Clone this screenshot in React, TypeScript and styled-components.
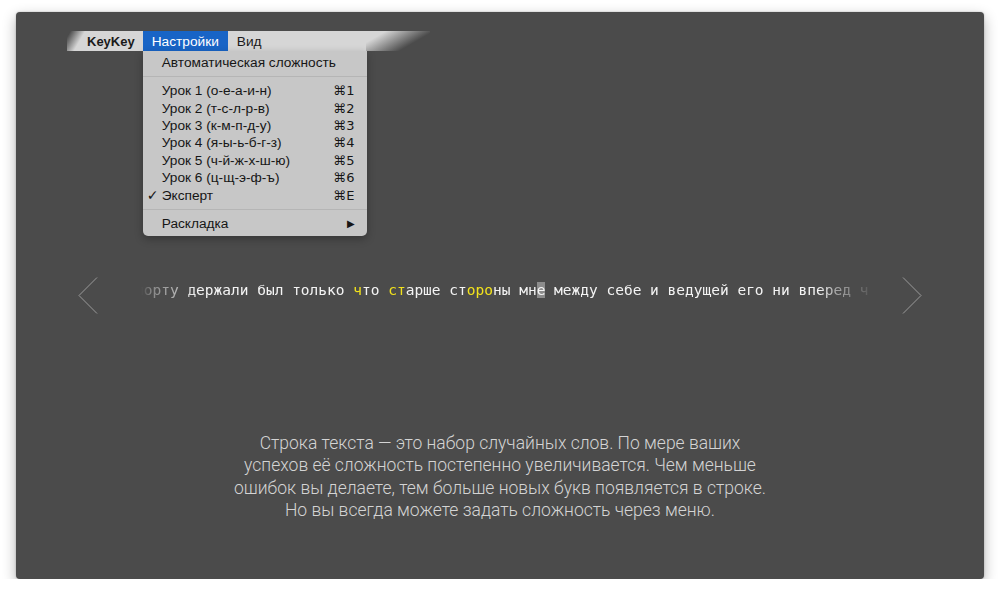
import React from 'react';
import styled, { createGlobalStyle } from 'styled-components';

const GlobalStyle = createGlobalStyle`
  html, body {
    margin: 0;
    padding: 0;
    background: #ffffff;
  }
`;

const PANEL_BG = '#4b4b4b';

// Window

const Window = styled.main`
  margin: 12px 16px 0;
  width: 968px;
  height: 567px;
  box-sizing: border-box;
  background: ${PANEL_BG};
  border-radius: 4px;
  box-shadow: 0 5px 14px rgba(0, 0, 0, 0.3), 0 0 2px rgba(0, 0, 0, 0.25);
  display: flex;
  flex-direction: column;
`;

// Menu bar

const MenuBarRow = styled.div`
  padding: 19px 0 0 51px;
  display: flex;
`;

const MenuBar = styled.nav`
  width: 363px;
  height: 20px;
  padding-left: 12px;
  box-sizing: border-box;
  display: flex;
  align-items: stretch;
  background-color: #d6d6d6;
  background-image: linear-gradient(120deg, ${PANEL_BG} 3px, rgba(75, 75, 75, 0) 16px),
    linear-gradient(150deg, rgba(75, 75, 75, 0) 10px, ${PANEL_BG} 34px);
  background-size: 30px 20px, 64px 20px;
  background-position: left top, right top;
  background-repeat: no-repeat;
  font-family: 'Liberation Sans', Arial, sans-serif;
  font-size: 13.7px;
  color: #1a1a1a;
`;

const MenuTitle = styled.div<{ $active?: boolean; $bold?: boolean }>`
  position: relative;
  padding: 0 ${(p) => (p.$bold ? 8 : 9)}px;
  display: flex;
  align-items: center;
  font-size: ${(p) => (p.$bold ? '13px' : 'inherit')};
  font-weight: ${(p) => (p.$bold ? 700 : 400)};
  background: ${(p) => (p.$active ? '#1864c6' : 'transparent')};
  color: ${(p) => (p.$active ? '#ffffff' : '#1a1a1a')};
`;

const Dropdown = styled.div`
  position: absolute;
  top: 100%;
  left: 0;
  width: 224px;
  padding: 3px 0 4px;
  box-sizing: border-box;
  background: #c7c7c7;
  border-radius: 0 0 5px 5px;
  box-shadow: 0 3px 8px rgba(0, 0, 0, 0.28);
  color: #161616;
  font-size: 13.7px;
  font-weight: 400;
  z-index: 2;
`;

const Item = styled.div`
  height: 17.4px;
  padding: 0 12px 0 19px;
  display: flex;
  align-items: center;
  justify-content: space-between;
  position: relative;
  white-space: nowrap;
`;

const Check = styled.span`
  position: absolute;
  left: 4px;
  font-family: 'DejaVu Sans', sans-serif;
  font-size: 14px;
`;

const Shortcut = styled.span`
  font-family: 'DejaVu Sans', 'Liberation Sans', sans-serif;
  font-size: 13px;
  letter-spacing: 0.2px;
`;

const Separator = styled.div`
  height: 10.6px;
  display: flex;
  align-items: center;

  &::after {
    content: '';
    flex: 1;
    height: 1px;
    background: #b5b5b5;
  }
`;

const Arrow = styled.span`
  font-family: 'DejaVu Sans', sans-serif;
  font-size: 10px;
`;

// Typing line

const TypingRow = styled.section`
  margin-top: 226px;
  padding: 0 62px;
  height: 37px;
  display: flex;
  align-items: flex-start;
`;

const Chevron = styled.svg`
  width: 20px;
  height: 37px;
  flex-shrink: 0;
  stroke: #9a9a9a;
  stroke-width: 1;
  fill: none;
`;

const fade = `linear-gradient(
    to right,
    transparent 6px,
    rgba(0, 0, 0, 0.35) 16px,
    rgba(0, 0, 0, 0.6) 40px,
    #000 62px,
    #000 684px,
    rgba(0, 0, 0, 0.55) 700px,
    rgba(0, 0, 0, 0.3) 720px,
    rgba(0, 0, 0, 0.08) 736px
  )`;

const Line = styled.div`
  width: 736px;
  margin: 3px 32px 0 37px;
  height: 20px;
  line-height: 20px;
  white-space: pre;
  font-family: 'DejaVu Sans Mono', 'Liberation Mono', monospace;
  font-size: 14.5px;
  color: #f4f4f4;
  -webkit-mask-image: ${fade};
  mask-image: ${fade};
`;

const Glyphs = styled.span<{ $kind: 'plain' | 'new' | 'cursor' }>`
  color: ${(p) => (p.$kind === 'new' ? '#f2e21c' : '#f4f4f4')};
  background: ${(p) => (p.$kind === 'cursor' ? '#8c8c8c' : 'transparent')};
`;

// Help text

const Help = styled.p`
  margin: 118px 0 0;
  text-align: center;
  font-family: Roboto, 'Liberation Sans', sans-serif;
  font-weight: 300;
  font-size: 17.5px;
  line-height: 22.4px;
  color: #d4d4d4;
`;

type Segment = { t: string; k: 'plain' | 'new' | 'cursor' };

const segments: Segment[] = [
  { t: 'порту держали был только ', k: 'plain' },
  { t: 'ч', k: 'new' },
  { t: 'то ', k: 'plain' },
  { t: 'ст', k: 'new' },
  { t: 'арше ст', k: 'plain' },
  { t: 'оро', k: 'new' },
  { t: 'ны мн', k: 'plain' },
  { t: 'е', k: 'cursor' },
  { t: ' между себе и ведущей его ни вперед ч', k: 'plain' },
];

const lessons = [
  ['Урок 1 (о-е-а-и-н)', '⌘1'],
  ['Урок 2 (т-с-л-р-в)', '⌘2'],
  ['Урок 3 (к-м-п-д-у)', '⌘3'],
  ['Урок 4 (я-ы-ь-б-г-з)', '⌘4'],
  ['Урок 5 (ч-й-ж-х-ш-ю)', '⌘5'],
  ['Урок 6 (ц-щ-э-ф-ъ)', '⌘6'],
];

function App(): JSX.Element {
  return (
    <>
      <GlobalStyle />
      <Window>
        <MenuBarRow>
          <MenuBar>
            <MenuTitle $bold>KeyKey</MenuTitle>
            <MenuTitle $active>
              Настройки
              <Dropdown>
                <Item>Автоматическая сложность</Item>
                <Separator />
                {lessons.map(([name, key]) => (
                  <Item key={name}>
                    {name}
                    <Shortcut>{key}</Shortcut>
                  </Item>
                ))}
                <Item>
                  <Check>✓</Check>
                  Эксперт
                  <Shortcut>⌘E</Shortcut>
                </Item>
                <Separator />
                <Item>
                  Раскладка
                  <Arrow>▶</Arrow>
                </Item>
              </Dropdown>
            </MenuTitle>
            <MenuTitle>Вид</MenuTitle>
          </MenuBar>
        </MenuBarRow>

        <TypingRow>
          <Chevron viewBox="0 0 20 37">
            <polyline points="19,0.5 1,18.5 19,36.5" />
          </Chevron>
          <Line>
            {segments.map((s, i) => (
              <Glyphs key={i} $kind={s.k}>
                {s.t}
              </Glyphs>
            ))}
          </Line>
          <Chevron viewBox="0 0 20 37">
            <polyline points="1,0.5 19,18.5 1,36.5" />
          </Chevron>
        </TypingRow>

        <Help>
          Строка текста — это набор случайных слов. По мере ваших
          <br />
          успехов её сложность постепенно увеличивается. Чем меньше
          <br />
          ошибок вы делаете, тем больше новых букв появляется в строке.
          <br />
          Но вы всегда можете задать сложность через меню.
        </Help>
      </Window>
    </>
  );
}

export default App;
